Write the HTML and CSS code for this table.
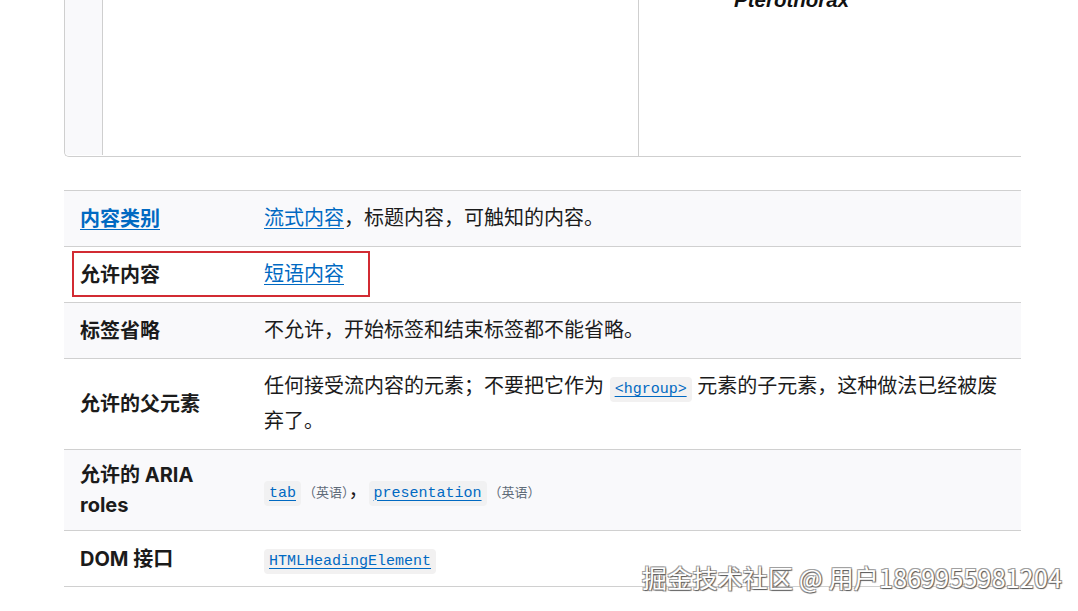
FILE: index.html
```html
<!DOCTYPE html>
<html lang="zh-CN">
<head>
<meta charset="utf-8">
<title>h1–h6 标题元素</title>
<link rel="stylesheet" href="styles.css">
</head>
<body>
<div class="page">
  <div class="frame">
    <div class="frame-side"></div>
    <div class="frame-mid"></div>
    <div class="frame-right"><span class="species">Pterothorax</span></div>
  </div>

  <div class="table-wrap">
    <table class="props">
      <tbody>
        <tr class="alt">
          <th><a href="#">内容类别</a></th>
          <td><a href="#">流式内容</a>，标题内容，可触知的内容。</td>
        </tr>
        <tr>
          <th>允许内容</th>
          <td><a href="#">短语内容</a></td>
        </tr>
        <tr class="alt">
          <th>标签省略</th>
          <td>不允许，开始标签和结束标签都不能省略。</td>
        </tr>
        <tr>
          <th>允许的父元素</th>
          <td>任何接受流内容的元素；不要把它作为 <code><a href="#">&lt;hgroup&gt;</a></code> 元素的子元素，这种做法已经被废弃了。</td>
        </tr>
        <tr class="alt">
          <th>允许的 ARIA roles</th>
          <td><code><a href="#">tab</a></code><small class="en">（英语）</small>，<code><a href="#">presentation</a></code><small class="en">（英语）</small></td>
        </tr>
        <tr>
          <th>DOM 接口</th>
          <td><code><a href="#">HTMLHeadingElement</a></code></td>
        </tr>
      </tbody>
    </table>
    <div class="highlight"></div>
  </div>
</div>
<div class="watermark">掘金技术社区 @ 用户1869955981204</div>
</body>
</html>
```

FILE: styles.css
```css
html, body {
  margin: 0;
  padding: 0;
  background: #ffffff;
}

body {
  font-family: Inter, "Noto Sans CJK SC", sans-serif;
  color: #1b1b1b;
  width: 1078px;
  height: 611px;
  overflow: hidden;
  position: relative;
}

.page {
  width: 957px;
  margin-left: 64px;
}

.frame {
  box-sizing: border-box;
  height: 157px;
  border-left: 1px solid #cfcfcf;
  border-bottom: 1px solid #cfcfcf;
  border-bottom-left-radius: 5px;
  display: grid;
  grid-template-columns: 38px 536px 1fr;
}

.frame-side {
  background: #f9f9fb;
  border-right: 1px solid #cfcfcf;
  border-bottom-left-radius: 4px;
  margin-bottom: 1px;
}

.frame-mid {
  border-right: 1px solid #cfcfcf;
}

.frame-right {
  padding-left: 95px;
  margin-top: -12px;
  line-height: 24px;
}

.species {
  font-family: "Liberation Sans", Arial, sans-serif;
  font-weight: bold;
  font-style: italic;
  font-size: 20.5px;
  color: #111;
}

.table-wrap {
  position: relative;
  margin-top: 33px;
}

.props {
  width: 957px;
  border-collapse: collapse;
  table-layout: fixed;
  font-size: 20px;
}

.props tr {
  border-top: 1px solid #d0d0d0;
  border-bottom: 1px solid #d0d0d0;
}

.props tr.alt {
  background: #f9f9fb;
}

.props th {
  width: 152px;
  padding: 10px 16px;
  text-align: left;
  font-weight: 700;
  line-height: 30px;
  vertical-align: middle;
}

.props td {
  padding: 10px 16px;
  line-height: 35px;
  height: 35px;
  vertical-align: middle;
}

.props a {
  color: #0069c2;
  text-decoration: underline;
  text-underline-offset: 3px;
  text-decoration-thickness: 1px;
}

.props code {
  font-family: "Liberation Mono", "DejaVu Sans Mono", monospace;
  font-size: 15px;
  line-height: 1;
  background: #f2f1f1;
  border-radius: 4px;
  padding: 4px 5px;
}

.props tr.alt code {
  background: #f1f1f2;
}

.en {
  font-size: 13px;
  line-height: 1;
  color: #5f6b78;
  margin-left: 2px;
}

.highlight {
  position: absolute;
  left: 8px;
  top: 61px;
  width: 294px;
  height: 42px;
  border: 2px solid #d22b33;
  pointer-events: none;
}

.watermark {
  position: absolute;
  left: 642px;
  top: 564px;
  font-family: "Noto Sans CJK SC", sans-serif;
  font-size: 25px;
  line-height: 27px;
  letter-spacing: 0.2px;
  color: #ffffff;
  white-space: nowrap;
  text-shadow: 1px 1px 1px #5a5a5a, -1px -1px 0 #a0a0a0, 1px -1px 0 #a0a0a0, -1px 1px 0 #a0a0a0;
}
```
